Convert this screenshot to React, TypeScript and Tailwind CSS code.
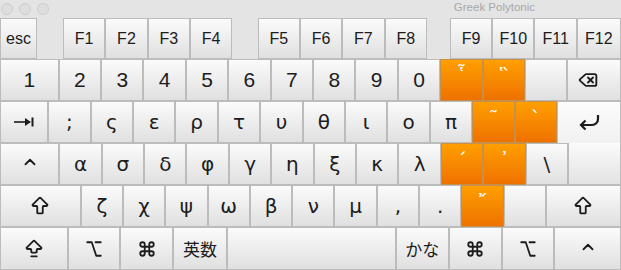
import type { ReactNode } from "react";
import { ArrowBigUp, ArrowBigUpDash, Command, Option, Delete, ChevronUp } from "lucide-react";

const greek = "font-['DejaVu_Sans',sans-serif] text-[20px]";
const latin = "font-['Liberation_Sans',sans-serif]";

interface KeyProps {
  className?: string;
  orange?: boolean;
  children?: ReactNode;
}

function Key({ className = "", orange = false, children }: KeyProps) {
  const skin = orange
    ? "items-start pt-[1px] border-[#c7904a] bg-linear-to-b from-[#ff9f00] to-[#ee7100] text-white"
    : "items-center border-[#bcbcbc] bg-linear-to-b from-[#fbfbfb] to-[#e0e0e0] text-[#1c1c1c]";
  return <div className={`flex h-full shrink-0 justify-center border ${skin} ${className}`}>{children}</div>;
}

function TabIcon() {
  return (
    <svg width="20" height="10" viewBox="0 0 20 10">
      <path d="M0 5h12" stroke="#1c1c1c" strokeWidth="1.6" />
      <path d="M11 1l6 4-6 4z" fill="#1c1c1c" />
      <path d="M18.5 0.5v9" stroke="#1c1c1c" strokeWidth="2" />
    </svg>
  );
}

function ReturnIcon() {
  return (
    <svg width="24" height="18" viewBox="0 0 24 18" fill="none" stroke="#1c1c1c" strokeWidth="2.2">
      <path d="M21 1v4a6 6 0 0 1-6 6H4" />
      <path d="M8.5 6.5 4 11l4.5 4.5" />
    </svg>
  );
}

const digits = ["2", "3", "4", "5", "6", "7", "8", "9", "0"];
const row2 = [";", "ς", "ε", "ρ", "τ", "υ", "θ", "ι", "ο", "π"];
const row3 = ["α", "σ", "δ", "φ", "γ", "η", "ξ", "κ", "λ"];
const row4 = ["ζ", "χ", "ψ", "ω", "β", "ν", "μ", ",", "."];

export default function App() {
  return (
    <div className="flex h-[270px] w-[621px] flex-col overflow-hidden bg-[#e4e4e4] select-none">
      <div className="flex h-[18px] shrink-0 items-center gap-[6px] pl-[1px]">
        <span className="h-[12px] w-[12px] rounded-full border border-[#cdcdcd] bg-[#dedede]" />
        <span className="h-[12px] w-[12px] rounded-full border border-[#cdcdcd] bg-[#dedede]" />
        <span className="h-[12px] w-[12px] rounded-full border border-[#cdcdcd] bg-[#dedede]" />
        <span className={`ml-auto mr-[86px] -mt-[3px] text-[11.5px] text-[#a8a8a8] ${latin}`}>Greek Polytonic</span>
      </div>

      <div className={`flex h-[41px] shrink-0 text-[16px] ${latin}`}>
        <Key className="w-[37px]">esc</Key>
        <div className="w-[26px] shrink-0" />
        <Key className="w-[42.3px]">F1</Key>
        <Key className="w-[42.3px]">F2</Key>
        <Key className="w-[42.3px]">F3</Key>
        <Key className="w-[42.3px]">F4</Key>
        <div className="w-[25.5px] shrink-0" />
        <Key className="w-[42.3px]">F5</Key>
        <Key className="w-[42.3px]">F6</Key>
        <Key className="w-[42.3px]">F7</Key>
        <Key className="w-[42.3px]">F8</Key>
        <div className="w-[23px] shrink-0" />
        <Key className="w-[42.3px]">F9</Key>
        <Key className="w-[42.3px]">F10</Key>
        <Key className="w-[42.3px]">F11</Key>
        <Key className="flex-1">F12</Key>
      </div>

      <div className={`flex h-[42px] shrink-0 text-[21px] ${latin}`}>
        <Key className="w-[58.7px]">1</Key>
        {digits.map((d) => (
          <Key key={d} className="w-[42.4px]">
            {d}
          </Key>
        ))}
        <Key orange className={`w-[42.4px] ${greek}`}>῟</Key>
        <Key orange className={`w-[42.4px] ${greek}`}>῝</Key>
        <Key className="w-[42.4px]" />
        <Key className="flex-1 pr-[12px]">
          <Delete size={20} strokeWidth={2.2} />
        </Key>
      </div>

      <div className={`flex h-[42px] shrink-0 ${greek}`}>
        <Key className="w-[48.3px]">
          <TabIcon />
        </Key>
        {row2.map((c) => (
          <Key key={c} className="w-[42.4px]">
            {c}
          </Key>
        ))}
        <Key orange className="w-[42.4px]">῀</Key>
        <Key orange className="w-[42.4px]">`</Key>
        <Key className="flex-1 border-b-0 from-[#fcfcfc] to-[#f1f1f1]">
          <ReturnIcon />
        </Key>
      </div>

      <div className={`flex h-[42px] shrink-0 ${greek}`}>
        <Key className="w-[59.3px]">
          <ChevronUp size={18} strokeWidth={2.4} className="-mt-[4px]" />
        </Key>
        {row3.map((c) => (
          <Key key={c} className="w-[42.4px]">
            {c}
          </Key>
        ))}
        <Key orange className="w-[42.4px]">΄</Key>
        <Key orange className="w-[42.4px]">᾿</Key>
        <Key className="w-[42.4px]">\</Key>
        <Key className="flex-1 border-t-0 from-[#f1f1f1] to-[#e3e3e3]" />
      </div>

      <div className={`flex h-[42px] shrink-0 ${greek}`}>
        <Key className="w-[80.7px]">
          <ArrowBigUp size={22} strokeWidth={2} />
        </Key>
        {row4.map((c) => (
          <Key key={c} className="w-[42.3px]">
            {c}
          </Key>
        ))}
        <Key orange className="w-[42.3px]">῎</Key>
        <Key className="w-[42.3px]" />
        <Key className="flex-1">
          <ArrowBigUp size={22} strokeWidth={2} />
        </Key>
      </div>

      <div className="flex h-[43px] shrink-0 text-[17px] font-['Noto_Sans_CJK_JP',sans-serif]">
        <Key className="w-[67.7px]">
          <ArrowBigUpDash size={22} strokeWidth={2} />
        </Key>
        <Key className="w-[52.6px]">
          <Option size={18} strokeWidth={2.4} />
        </Key>
        <Key className="w-[53px]">
          <Command size={18} strokeWidth={2.4} />
        </Key>
        <Key className="w-[53.4px]">英数</Key>
        <Key className="w-[169.4px]" />
        <Key className="w-[52.6px]">かな</Key>
        <Key className="w-[53.4px]">
          <Command size={18} strokeWidth={2.4} />
        </Key>
        <Key className="w-[52.3px]">
          <Option size={18} strokeWidth={2.4} />
        </Key>
        <Key className="flex-1">
          <ChevronUp size={18} strokeWidth={2.4} className="-mt-[4px]" />
        </Key>
      </div>
    </div>
  );
}
